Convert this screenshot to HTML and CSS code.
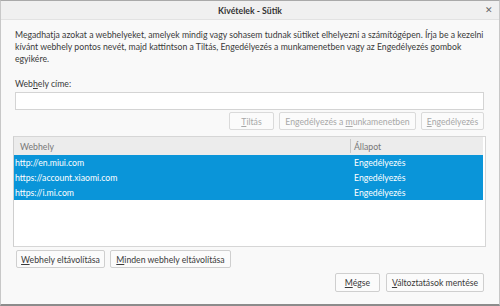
FILE: index.html
```html
<!DOCTYPE html>
<html lang="hu">
<head>
  <meta charset="UTF-8" />
  <title>Kivételek - Sütik</title>
  <link rel="stylesheet" href="styles.css">
</head>
<body>
  <div class="window">
    <div class="titlebar">
      <span class="title">Kivételek - Sütik</span>
      <span class="close">&#x2715;</span>
    </div>

    <div class="content">
      <p class="desc">Megadhatja azokat a webhelyeket, amelyek mindig vagy sohasem tudnak sütiket elhelyezni a számítógépen. Írja be a kezelni kívánt webhely pontos nevét, majd kattintson a Tiltás, Engedélyezés a munkamenetben vagy az Engedélyezés gombok egyikére.</p>

      <label class="field-label" for="site">Web<u>h</u>ely címe:</label>
      <input type="text" id="site" class="site-input" />

      <div class="button-row right">
        <button class="btn w-block" disabled><u>T</u>iltás</button>
        <button class="btn w-session" disabled>Engedélyezés a <u>m</u>unkamenetben</button>
        <button class="btn w-allow" disabled><u>E</u>ngedélyezés</button>
      </div>

      <div class="table">
        <div class="table-head">
          <div class="col-site">Webhely</div>
          <div class="col-status">Állapot</div>
        </div>
        <div class="row selected">
          <div class="col-site">http://en.miui.com</div>
          <div class="col-status">Engedélyezés</div>
        </div>
        <div class="row selected">
          <div class="col-site">https://account.xiaomi.com</div>
          <div class="col-status">Engedélyezés</div>
        </div>
        <div class="row selected">
          <div class="col-site">https://i.mi.com</div>
          <div class="col-status">Engedélyezés</div>
        </div>
      </div>

      <div class="button-row left">
        <button class="btn active w-remove"><u>W</u>ebhely eltávolítása</button>
        <button class="btn active w-remove-all"><u>M</u>inden webhely eltávolítása</button>
      </div>

      <div class="button-row footer">
        <button class="btn active w-cancel"><u>M</u>égse</button>
        <button class="btn active w-save"><u>V</u>áltoztatások mentése</button>
      </div>
    </div>
    <span class="grip"></span>
  </div>
</body>
</html>
```

FILE: styles.css
```css
* {
  box-sizing: border-box;
}

html, body {
  margin: 0;
  padding: 0;
  width: 500px;
  height: 306px;
  overflow: hidden;
  font-family: 'Lato', 'Open Sans', sans-serif;
  font-size: 8.7px;
  color: #3a3a3a;
}

.window {
  position: relative;
  width: 500px;
  height: 306px;
  display: flex;
  flex-direction: column;
  background-color: #f9f9f9;
  border-top: 1px solid #a9a9a9;
  border-left: 1px solid #c8c8c8;
  border-right: 1px solid #c8c8c8;
  border-bottom: 2px solid #8c8c8c;
}

.titlebar {
  position: relative;
  height: 19px;
  flex: none;
  display: flex;
  align-items: center;
  justify-content: center;
  background-color: #f0f0f0;
  border-bottom: 1px solid #e2e2e2;
}

.title {
  font-weight: 700;
  font-size: 8.7px;
  color: #333;
}

.close {
  position: absolute;
  right: 6px;
  top: 3px;
  font-size: 9px;
  color: #666;
}

.content {
  flex: 1;
  display: flex;
  flex-direction: column;
  padding: 9px 13px 0 12px;
}

.desc {
  margin: 0 0 0 2px;
  line-height: 12px;
}

.field-label {
  margin: 13px 0 0 2px;
  line-height: 12px;
}

.site-input {
  margin: 2px 2px 0 2px;
  height: 18px;
  border: 1px solid #d4d4d4;
  background: #fff;
  font: inherit;
}

.button-row {
  display: flex;
  gap: 5px;
}

.button-row.right {
  justify-content: flex-end;
  margin: 2px 2px 0 0;
}

.button-row.left {
  margin: 3px 0 0 3px;
}

.button-row.footer {
  justify-content: flex-end;
  gap: 6px;
  margin: 5px 2px 0 0;
}

.btn {
  height: 18px;
  padding: 0;
  font: inherit;
  color: #a8a8a8;
  background: #fbfbfb;
  border: 1px solid #dadada;
  border-radius: 2px;
}

.btn.active {
  color: #3a3a3a;
  border-color: #cfcfcf;
}

.footer .btn {
  height: 19px;
}

.w-block { width: 45px; }
.w-session { width: 137px; }
.w-allow { width: 63px; }
.w-remove { width: 89px; }
.w-remove-all { width: 121px; }
.w-cancel { width: 45px; }
.w-save { width: 98px; }

.table {
  margin-top: 6px;
  height: 111px;
  background: #fff;
  border: 1px solid #d6d6d6;
  border-left-color: #cfcfcf;
}

.table-head {
  display: flex;
  height: 18px;
  align-items: center;
  background: #ececec;
  color: #777;
  margin-right: 2px;
}

.table-head .col-status {
  border-left: 1px solid #c8c8c8;
  height: 14px;
  display: flex;
  align-items: center;
}

.col-site {
  width: 336px;
  padding-left: 6px;
}

.col-status {
  flex: 1;
  padding-left: 3px;
}

.row {
  display: flex;
  height: 15px;
  align-items: center;
  margin-right: 2px;
}

.row .col-site {
  padding-left: 1px;
}

.row .col-status {
  padding-left: 4px;
}

.selected {
  background: #0a95d9;
  color: #fff;
}

.grip {
  position: absolute;
  right: 1px;
  bottom: 1px;
  width: 5px;
  height: 5px;
  background: radial-gradient(circle, #aaa 35%, transparent 40%) 0 0 / 2px 2px;
}
```
